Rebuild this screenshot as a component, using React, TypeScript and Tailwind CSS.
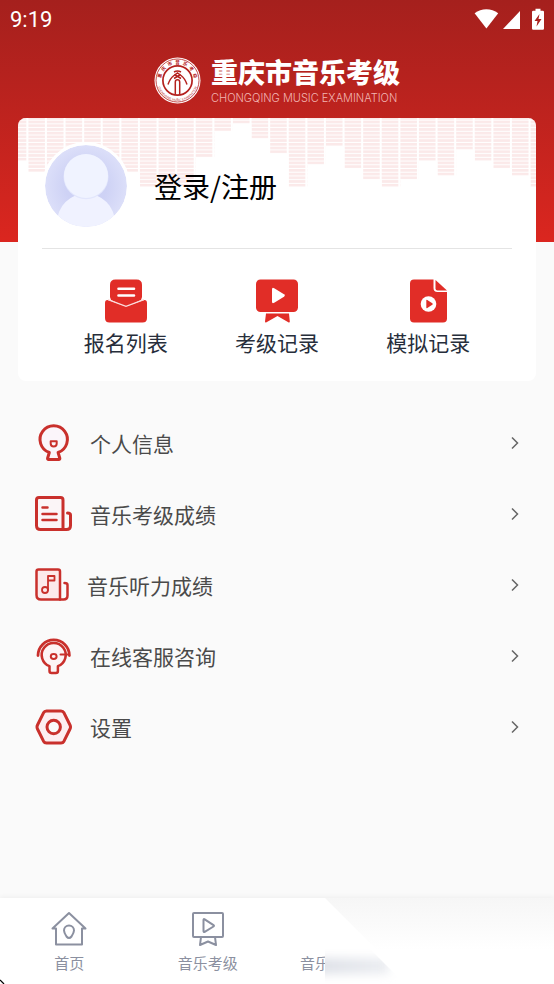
import type { ReactNode } from "react";

const RED = "#c9302c";

/* number of filled cells in each column of the equalizer */
const BARS = [
  11, 14, 14, 14, 14, 14, 14, 18, 18, 18, 10, 3, 1, 5, 9, 18, 12, 7, 13, 16, 18, 16, 11, 15, 8, 11,
  13, 15, 18,
];

function Equalizer() {
  return (
    <svg
      aria-hidden="true"
      viewBox="0 0 518 72"
      preserveAspectRatio="xMidYMin slice"
      className="absolute inset-x-0 top-0 h-[72px] w-full"
    >
      <defs>
        <pattern id="cells" width="18.6" height="3.72" x="-8.3" y="-1.1" patternUnits="userSpaceOnUse">
          <rect width="16.6" height="2.7" fill="#fbe9e9" />
        </pattern>
      </defs>
      {BARS.map((count, i) => (
        <rect key={i} x={-8.3 + i * 18.6} y="0" width="18.6" height={count * 3.72 + 1.8} fill="url(#cells)" />
      ))}
    </svg>
  );
}

function StatusBar() {
  return (
    <div className="flex h-10 items-center justify-between px-[10px] text-white">
      <span className="font-['Roboto',sans-serif] text-[22px] leading-6">9:19</span>
      <svg aria-hidden="true" width="70" height="24" viewBox="0 0 70 24" fill="currentColor">
        <path d="M0.6 5.2C7.5-.2 17.3-.2 24.2 5.2L12.4 20.6Z" />
        <path d="M46 3v18H29Z" />
        <path
          fillRule="evenodd"
          d="M61.5 .8h5v2h2.3q1.2 0 1.2 1.2v16.5q0 1.2-1.2 1.2h-9.6q-1.2 0-1.2-1.2V4q0-1.2 1.2-1.2h2.3zM65.5 6l-5 7h3l-1 5.5 5-7.5h-3z"
        />
      </svg>
    </div>
  );
}

function Seal() {
  return (
    <svg aria-hidden="true" width="47" height="47" viewBox="0 0 47 47">
      <defs>
        <path id="seal-bottom" d="M3 23.5A20.5 20.5 0 0 0 44 23.5" />
      </defs>
      <circle cx="23.5" cy="23.5" r="23" fill="#fff" />
      <circle cx="23.5" cy="23.5" r="21.5" fill="none" stroke="#b4211e" strokeWidth=".8" />
      <g fontSize="4.5" fontWeight="700" fill="#b4211e" fontFamily="'Noto Sans CJK SC', sans-serif">
        {[..."重庆市音乐考级"].map((char, i) => (
          <text key={char} x="23.5" y="6.8" textAnchor="middle" transform={`rotate(${(i - 3) * 25} 23.5 23.5)`}>
            {char}
          </text>
        ))}
      </g>
      <text fontSize="3" fill="#b4211e" fontFamily="'Liberation Sans', sans-serif">
        <textPath href="#seal-bottom" startOffset="50%" textAnchor="middle">
          CHONGQING MUSIC EXAMINATION
        </textPath>
      </text>
      <circle cx="23.5" cy="23.5" r="14.6" fill="#fff" stroke="#b4211e" strokeWidth="1.7" />
      <g fill="none" stroke="#b4211e" strokeWidth="1.5">
        <path d="M20 15q3.5-2 7 0" />
        <path d="M14 27.500q2-6 6-9l3.500-2.500 3.500 2.500q4 3 6 9" />
        <path d="M20 21.500l6.500-4M27 21.500l-6.500-4" />
        <path d="M21.300 37.500V25q0-2.200 2.200-2.200t2.200 2.200v12.500" />
      </g>
    </svg>
  );
}

function Avatar() {
  return (
    <svg
      aria-hidden="true"
      viewBox="0 0 82 82"
      className="size-[88px] shrink-0 rounded-full border-[3px] border-white bg-white"
    >
      <defs>
        <clipPath id="avatar-clip">
          <circle cx="41" cy="41" r="41" />
        </clipPath>
        <radialGradient id="avatar-bg">
          <stop offset="0.5" stopColor="#ced2f5" />
          <stop offset="1" stopColor="#dcdff9" />
        </radialGradient>
      </defs>
      <g clipPath="url(#avatar-clip)">
        <rect width="82" height="82" fill="url(#avatar-bg)" />
        <circle cx="41" cy="77.5" r="29" fill="#f0f2ff" />
        <circle cx="41" cy="31.7" r="22.5" fill="#e2e6fc" />
        <circle cx="41" cy="31" r="22" fill="#f0f3ff" />
      </g>
    </svg>
  );
}

const features: { label: string; icon: ReactNode }[] = [
  {
    label: "报名列表",
    icon: (
      <>
        <path d="M5 18V6q0-5.5 5.5-5.5h21Q37 .5 37 6v12l-1 3-15 7-15-7z" fill="#e12d27" />
        <path d="M13.500 9.700h15.500M13.500 16.500h15.500" stroke="#fff" strokeWidth="2.6" strokeLinecap="round" />
        <path
          d="M0 24q0-4 4.500-2.600L21 27.500l16.500-6.100Q42 20 42 24v15q0 4.500-4.500 4.500h-33Q0 43.500 0 39z"
          fill="#e12d27"
        />
        <path d="M3 20.600L21 27.300l18-6.700" fill="none" stroke="#fbdcdc" strokeWidth="1.2" />
      </>
    ),
  },
  {
    label: "考级记录",
    icon: (
      <>
        <rect width="42" height="32.5" y=".5" rx="4.5" fill="#e12d27" />
        <path d="M16 10.500q0-2.500 2.200-1.200l9.800 6q1.800 1.200 0 2.400l-9.800 6Q16 25 16 22.500z" fill="#fff" />
        <path d="M10 34.500h23l.8 8q0 1.500-1.500.8L21.500 37l-11 6.300Q9 44 9 42.500z" fill="#e12d27" />
      </>
    ),
  },
  {
    label: "模拟记录",
    icon: (
      <>
        <path d="M7 .5h19.500v8.500q0 4 4 4H40v26.500q0 4-4 4H7q-4 0-4-4v-35q0-4 4-4z" fill="#e12d27" />
        <path d="M28.500 1L40 11.500h-9.500q-2 0-2-2z" fill="#e12d27" />
        <circle cx="21.5" cy="25" r="7.8" fill="#fff" />
        <path d="M19.300 21.500q0-1.200 1-.6l5 3.300q1 .8 0 1.600l-5 3.300q-1 .6-1-.6z" fill="#e12d27" />
      </>
    ),
  },
];

const menu: { label: string; size: number; icon: ReactNode }[] = [
  {
    label: "个人信息",
    size: 38,
    icon: (
      <>
        <path
          d="M15.300 28.500A13.700 13.700 0 1 1 24.100 28.500L25.800 34.200q.3 1.300-1 1.300H14.600q-1.300 0-1-1.300z"
          fill="#fbf5fa"
        />
        <path d="M16.700 17.300h6v2.200a3 3 0 0 1-6 0z" strokeWidth="2" />
      </>
    ),
  },
  {
    label: "音乐考级成绩",
    size: 38,
    icon: (
      <>
        <path d="M29 34.500V5q0-2.500-2.500-2.500H5Q2.500 2.500 2.500 5v25.500q0 4 4 4z" fill="#fbf5f7" />
        <path d="M29 34.500h3.500q4 0 4-4V20q0-2-3-2" />
        <path d="M8.500 12.500h5M8.500 19h14M8.500 25h14" strokeWidth="2.5" />
      </>
    ),
  },
  {
    label: "音乐听力成绩",
    size: 35,
    icon: (
      <>
        <path d="M26 32.500V4.500Q26 2.500 24 2.500H4.500q-2 0-2 2V28q0 4.500 4.500 4.500z" fill="#fce9eb" strokeWidth="2.5" />
        <path d="M26 32.500h3.500q4 0 4-4V18q0-2-3-2" strokeWidth="2.5" />
        <path d="M14 23V9h6.500v4.500H14" strokeWidth="1.8" />
        <circle cx="11" cy="23" r="3" strokeWidth="1.8" />
      </>
    ),
  },
  {
    label: "在线客服咨询",
    size: 38,
    icon: (
      <>
        <path d="M4 18.500a15.700 15.700 0 0 1 31.400 0" strokeWidth="2.8" />
        <path
          d="M15.500 29.200A12 12 0 1 1 23.900 29.200V34q0 2-2 2h-4.400q-2 0-2-2z"
          fill="#fdf4f5"
          strokeWidth="2.5"
        />
        <ellipse cx="19.7" cy="19.5" rx="2.9" ry="2.4" strokeWidth="2" />
        <path d="M26.500 17.500H35" strokeWidth="2" />
      </>
    ),
  },
  {
    label: "设置",
    size: 38,
    icon: (
      <>
        <path
          d="M12.500 3H27q2 0 3 1.800l6 12.200q1 2 0 4l-6 12.200Q29 35 27 35H12.500q-2 0-3-1.800L3.500 21q-1-2 0-4l6-12.200q1-1.800 3-1.800z"
          fill="#fdeef1"
        />
        <circle cx="19.7" cy="19" r="6.7" fill="#fafafa" />
      </>
    ),
  },
];

function TabIcon({ children }: { children: ReactNode }) {
  return (
    <svg
      aria-hidden="true"
      width="36"
      height="36"
      viewBox="0 0 36 36"
      fill="none"
      stroke="#8b90a0"
      strokeWidth="2"
      strokeLinecap="round"
      strokeLinejoin="round"
    >
      {children}
    </svg>
  );
}

function TabBar() {
  return (
    <nav className="relative mt-auto grid h-[86px] grid-cols-4 overflow-hidden bg-white text-[15px] leading-5 text-[#8b90a0] shadow-[0_-1px_5px_rgba(0,0,0,0.05)]">
      <button type="button" className="flex flex-col items-center gap-[6px] pt-[13px]">
        <TabIcon>
          <path d="M1.500 17.500L18 2l16.500 15.500H31V33.500H5V17.500z" />
          <path d="M18 14.500a5 5 0 0 1 5 5q0 2-2.500 6q-2.500 3-5 0Q13 21.500 13 19.500a5 5 0 0 1 5-5z" />
        </TabIcon>
        首页
      </button>
      <button type="button" className="flex flex-col items-center gap-[6px] pt-[13px]">
        <TabIcon>
          <rect x="3" y="2" width="30" height="24" rx="1" />
          <path d="M13.500 9v11q0 1.500 1.200.8l8.800-5.300q1-.7 0-1.400L14.700 8.300q-1.200-.7-1.200.7z" />
          <path d="M11 26l-1 8L18 30.500l8 3.500-1-8" />
        </TabIcon>
        音乐考级
      </button>
      <button type="button" className="flex flex-col items-start pt-[55px] pl-[23px]">
        音乐
      </button>
      {/* fade over the right part of the bar */}
      <div className="absolute inset-y-0 right-0 left-[325px] bg-linear-to-b from-[#f6f6f6] to-white to-60% [clip-path:polygon(0_0,100%_0,100%_100%,86px_100%)]" />
      <div className="absolute top-[46px] left-[325px] h-10 w-24 overflow-hidden bg-white [clip-path:polygon(0_0,40px_0,80px_100%,0_100%)]">
        <div className="mt-[14px] -ml-4 h-4 w-20 bg-linear-to-r from-[#dcdfe6] to-[#eceef2] blur-[5px]" />
      </div>
    </nav>
  );
}

export default function App() {
  return (
    <div className="relative flex min-h-screen flex-col bg-[#fafafa] font-['Noto_Sans_CJK_SC',sans-serif]">
      <header className="h-[242px] bg-linear-to-b from-[#a5201d] to-[#db261f]">
        <StatusBar />
        <div className="flex items-center justify-center gap-[10px] pt-[14px]">
          <Seal />
          <div className="text-white">
            <h1 className="text-[27px] leading-9 font-black">重庆市音乐考级</h1>
            <p className="font-['Inter',sans-serif] text-[11px] leading-4 font-light text-[#f2b5b3]">
              CHONGQING MUSIC EXAMINATION
            </p>
          </div>
        </div>
      </header>

      <main>
        <section className="relative mx-[18px] -mt-[124px] overflow-hidden rounded-lg bg-white">
          <Equalizer />
          <div className="relative mx-6 border-b border-[#e4e4e4] pt-6 pb-[18px]">
            <button type="button" className="flex items-center gap-6 text-[28px] leading-10 text-black">
              <Avatar />
              登录/注册
            </button>
          </div>
          <div className="grid grid-cols-3 px-8 pt-[30px] pb-[23px]">
            {features.map((item) => (
              <button
                key={item.label}
                type="button"
                className="flex flex-col items-center gap-[3px] text-[21px] leading-8 text-[#272e3b]"
              >
                <svg aria-hidden="true" width="42" height="44" viewBox="0 0 42 44">
                  {item.icon}
                </svg>
                {item.label}
              </button>
            ))}
          </div>
        </section>

        <ul className="mt-[26px]">
          {menu.map((item) => (
            <li key={item.label}>
              <button
                type="button"
                className="flex h-[71px] w-full items-center gap-[18px] px-[34px] text-[21px] leading-8 text-[#4a4a4a]"
              >
                <svg
                  aria-hidden="true"
                  width={item.size}
                  height={item.size}
                  viewBox={`0 0 ${item.size} ${item.size}`}
                  fill="none"
                  stroke={RED}
                  strokeWidth="3"
                  strokeLinecap="round"
                  strokeLinejoin="round"
                >
                  {item.icon}
                </svg>
                {item.label}
                <svg
                  aria-hidden="true"
                  width="10"
                  height="14"
                  viewBox="0 0 10 14"
                  fill="none"
                  stroke="#666"
                  strokeWidth="1.5"
                  className="ml-auto"
                >
                  <path d="M2 1.500L7.500 7 2 12.500" />
                </svg>
              </button>
            </li>
          ))}
        </ul>
      </main>

      <TabBar />
      <svg aria-hidden="true" width="5" height="5" viewBox="0 0 5 5" className="absolute bottom-0 left-0">
        <path d="M0 1l4 4" stroke="#000" strokeWidth="1.2" />
      </svg>
    </div>
  );
}
